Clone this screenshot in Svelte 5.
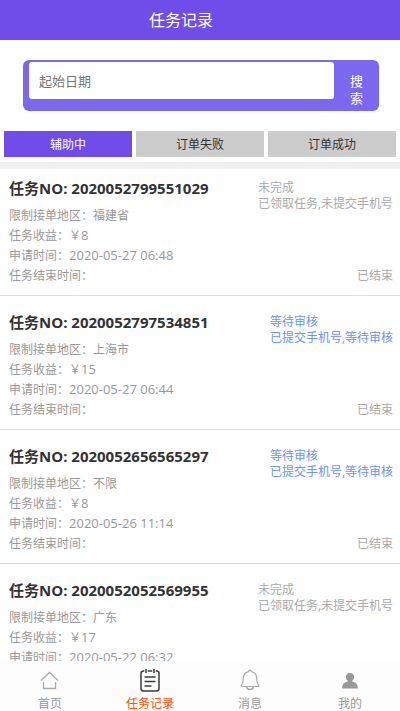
<script lang="ts">
	interface Task {
		no: string
		region: string
		reward: number
		applied: string
		state: string
		detail: string
		pending?: boolean
	}

	const tabs = ['辅助中', '订单失败', '订单成功']
	const pages = [
		{ icon: 'home', label: '首页' },
		{ icon: 'tasks', label: '任务记录' },
		{ icon: 'bell', label: '消息' },
		{ icon: 'user', label: '我的' }
	]

	const tasks: Task[] = [
		{
			no: '2020052799551029',
			region: '福建省',
			reward: 8,
			applied: '2020-05-27 06:48',
			state: '未完成',
			detail: '已领取任务,未提交手机号'
		},
		{
			no: '2020052797534851',
			region: '上海市',
			reward: 15,
			applied: '2020-05-27 06:44',
			state: '等待审核',
			detail: '已提交手机号,等待审核',
			pending: true
		},
		{
			no: '2020052656565297',
			region: '不限',
			reward: 8,
			applied: '2020-05-26 11:14',
			state: '等待审核',
			detail: '已提交手机号,等待审核',
			pending: true
		},
		{
			no: '2020052052569955',
			region: '广东',
			reward: 17,
			applied: '2020-05-22 06:32',
			state: '未完成',
			detail: '已领取任务,未提交手机号'
		}
	]

	let current = $state(0)
	let date = $state('')
</script>

<div class="app">
	<header class="top">
		<h1>任务记录</h1>
	</header>

	<main>
		<form class="search" onsubmit={(e) => e.preventDefault()}>
			<input type="text" placeholder="起始日期" aria-label="起始日期" bind:value={date} />
			<button type="submit">搜索</button>
		</form>

		<div class="tabs">
			{#each tabs as tab, i}
				<button class:active={current === i} onclick={() => (current = i)}>{tab}</button>
			{/each}
		</div>

		<ul class="tasks">
			{#each tasks as task}
				<li>
					<div class="info">
						<h2>任务NO: {task.no}</h2>
						<p>限制接单地区：{task.region}</p>
						<p>任务收益：￥<span class="num">{task.reward}</span></p>
						<p>申请时间：<time class="num">{task.applied}</time></p>
						<p>任务结束时间：</p>
					</div>
					<div class="side">
						<div class="status" class:pending={task.pending}>
							{task.state}<br />{task.detail}
						</div>
						<p class="closed">已结束</p>
					</div>
				</li>
			{/each}
		</ul>
	</main>

	<nav>
		{#each pages as page}
			<a href="#{page.icon}" class:active={page.icon === 'tasks'}>
				<svg width="24" height="24" viewBox="0 0 24 24" fill="none" aria-hidden="true">
					{#if page.icon === 'home'}
						<path d="M3 12.500 11.500 4.500 20 12.500M5.500 14v6.500h12V14" stroke="#aaa" stroke-width="1.300" />
					{:else if page.icon === 'tasks'}
						<rect x="3" y="3" width="18" height="20" rx="2.500" stroke="#3c3c3c" stroke-width="1.500" />
						<path d="M8 1v4M16 1v4" stroke="#fdfdfd" stroke-width="3.500" />
						<path d="M8 1v4M16 1v4M6.500 9h11M6.500 13.500h11M6.500 18h7" stroke="#3c3c3c" stroke-width="1.500" />
					{:else if page.icon === 'bell'}
						<path
							d="M3.500 18.500c-.8-.5-.4-1.300.3-2.100 1.200-1.400 1.400-2.500 1.400-5.400 0-4 2.400-6.800 5.500-7.400 0-2.100 2.600-2.100 2.600 0 3.100.6 5.500 3.400 5.500 7.400 0 2.900.2 4 1.400 5.400.7.8 1.100 1.600.3 2.100Z"
							stroke="#aaa"
							stroke-width="1.200"
						/>
						<path d="M8.500 19c.8 3.200 6.200 3.200 7 0" stroke="#aaa" stroke-width="1.400" />
					{:else}
						<path
							d="M12 5c2.500 0 4.200 1.700 4.200 4 0 1.700-.8 3-2 3.700v.8c3 .7 5.600 2.300 5.600 6.200v.8H4.200v-.8c0-3.900 2.600-5.500 5.600-6.200v-.8c-1.200-.7-2-2-2-3.700C7.800 6.700 9.500 5 12 5Z"
							fill="#999"
						/>
					{/if}
				</svg>
				<span>{page.label}</span>
			</a>
		{/each}
	</nav>
</div>

<style>
	:global(body) {
		margin: 0;
		background: #fff;
	}

	.app {
		display: flex;
		flex-direction: column;
		height: 100vh;
		color: #999;
		font: 12px/20px 'Open Sans', 'Noto Sans CJK SC', sans-serif;
	}

	h1,
	h2,
	p,
	ul {
		margin: 0;
		padding: 0;
	}

	button,
	input {
		box-sizing: border-box;
		border: 0;
		font-family: inherit;
	}

	button {
		cursor: pointer;
	}

	.top {
		flex: none;
		padding-right: 38px;
		background: #704de8;
		color: #fff;
		text-align: center;

		h1 {
			font-size: 16px;
			font-weight: 400;
			line-height: 40px;
		}
	}

	main {
		flex: 1;
		min-height: 0;
		overflow-y: auto;
		scrollbar-width: none;
	}

	.search {
		display: flex;
		align-items: flex-start;
		margin: 20px 21px 20px 23px;
		padding-left: 6px;
		border-radius: 6px;
		background: #7b68ee;

		input {
			flex: 1;
			min-width: 0;
			height: 37px;
			margin-top: 2px;
			padding: 0 10px;
			border-radius: 3px;
			background: #fff;
			color: #333;
			font-size: 13px;
		}

		input::placeholder {
			color: #757575;
		}

		button {
			width: 45px;
			padding: 13px 15px 4px;
			background: none;
			color: #fff;
			font-size: 13px;
			line-height: 17px;
		}
	}

	.tabs {
		display: grid;
		grid-template-columns: repeat(3, 1fr);
		gap: 4px;
		padding: 0 4px 5px;
		border-bottom: 7px solid #f0f0f0;

		button {
			height: 26px;
			padding: 0;
			background: #ccc;
			color: #333;
			font-size: 12px;
		}

		button.active {
			background: #704de8;
			color: #fff;
		}
	}

	.tasks {
		list-style: none;

		li {
			display: flex;
			justify-content: space-between;
			padding: 16px 7px 9px 9px;
			border-bottom: 1px solid #ddd;
		}

		li:first-child {
			padding-top: 9px;
		}

		h2 {
			margin-bottom: 8px;
			color: #333;
			font-size: 15px;
			font-weight: 700;
			line-height: 20px;
		}
	}

	.info {
		white-space: nowrap;
	}

	.num {
		font-size: 13px;
		line-height: 16px;
	}

	.side {
		display: flex;
		flex-direction: column;
		justify-content: space-between;
		color: #aaa;
		white-space: nowrap;
	}

	.status {
		padding-top: 2px;
		line-height: 16px;
	}

	.status.pending {
		color: #6b93fa;
	}

	.closed {
		text-align: right;
	}

	nav {
		display: grid;
		flex: none;
		grid-template-columns: repeat(4, 1fr);
		height: 50px;
		background: #fdfdfd;

		a {
			display: flex;
			flex-direction: column;
			align-items: center;
			gap: 2px;
			padding-top: 7px;
			color: #999;
			line-height: 20px;
			text-decoration: none;
		}

		a.active {
			color: #ff5500;
		}
	}
</style>
